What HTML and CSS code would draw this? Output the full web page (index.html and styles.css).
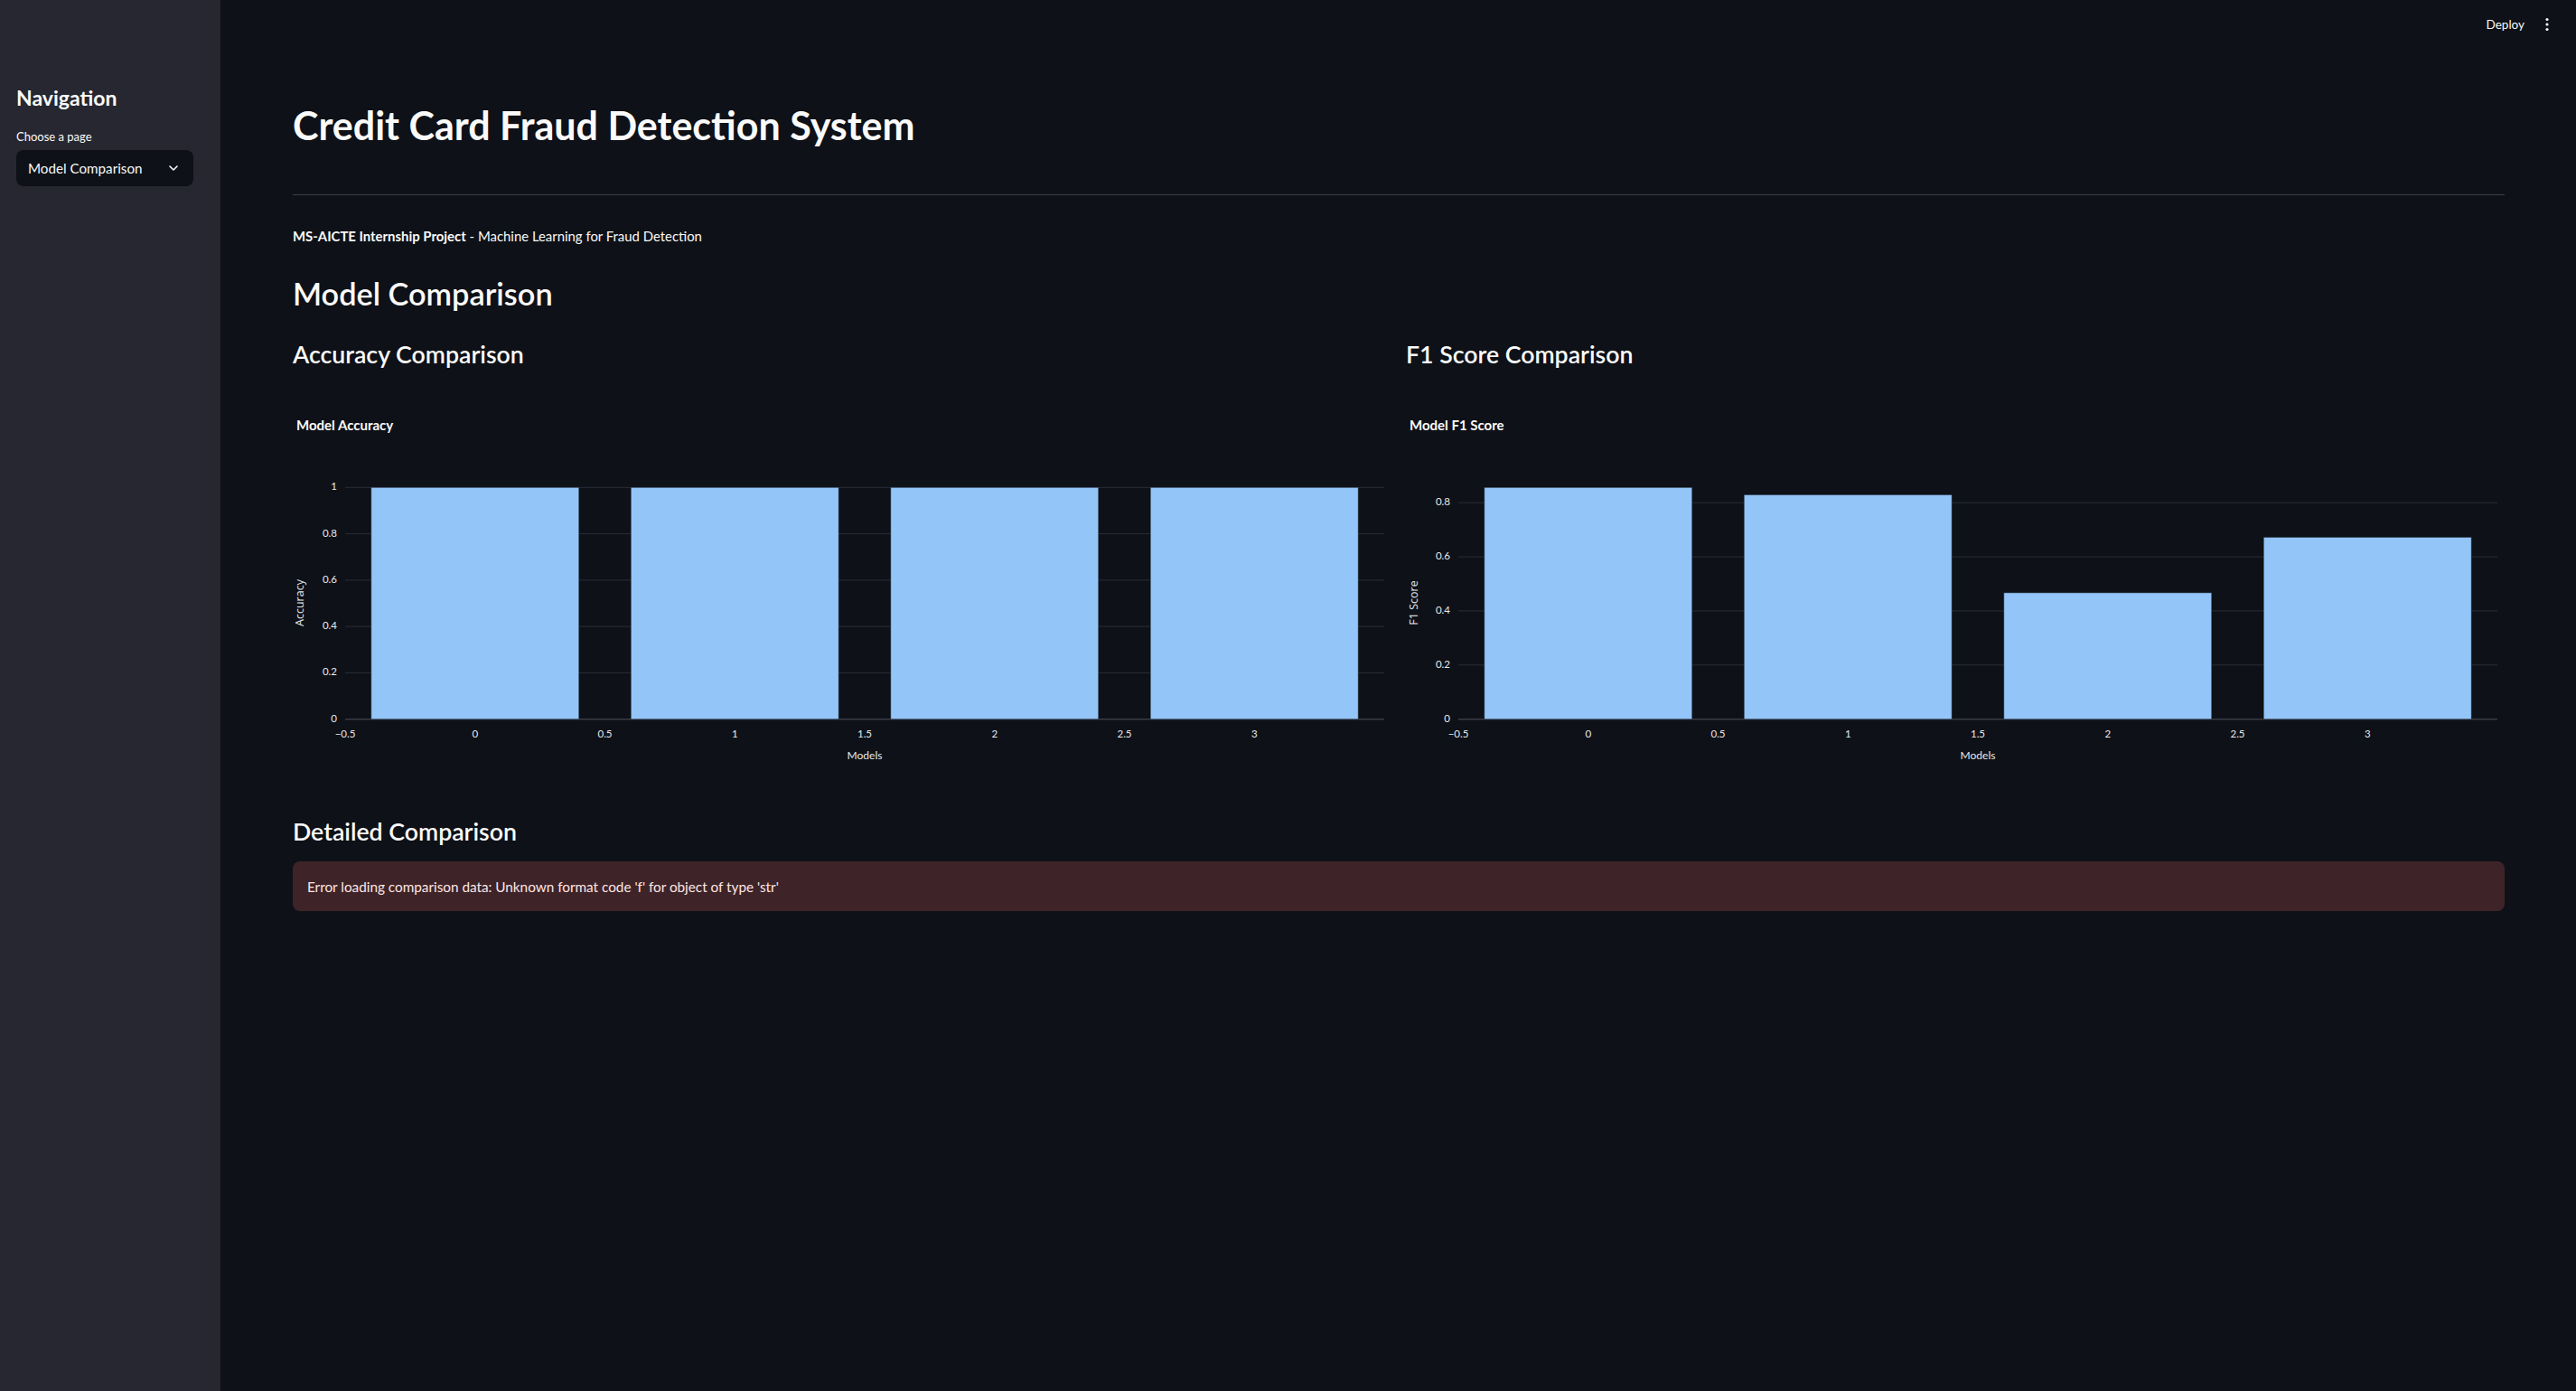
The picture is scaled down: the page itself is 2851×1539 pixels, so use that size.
FILE: index.html
```html
<!DOCTYPE html>
<html lang="en">
<head>
<meta charset="utf-8">
<title>Credit Card Fraud Detection System</title>
<link rel="stylesheet" href="styles.css">
</head>
<body>
<div class="app">
  <aside class="sidebar">
    <h2 class="side-title">Navigation</h2>
    <label class="side-label">Choose a page</label>
    <div class="select">
      <span class="select-value">Model Comparison</span>
      <svg class="chevron" viewBox="0 0 24 24" width="16" height="16"><path d="M6 9l6 6 6-6" fill="none" stroke="#fafafa" stroke-width="2.4" stroke-linecap="round" stroke-linejoin="round"/></svg>
    </div>
  </aside>
  <main class="main">
    <header class="toolbar">
      <span class="deploy">Deploy</span>
      <svg class="kebab" viewBox="0 0 6 16" width="6" height="16"><circle cx="3" cy="2.5" r="1.6" fill="#fafafa"/><circle cx="3" cy="8" r="1.6" fill="#fafafa"/><circle cx="3" cy="13.5" r="1.6" fill="#fafafa"/></svg>
    </header>
    <div class="block">
      <h1 class="title">Credit Card Fraud Detection System</h1>
      <hr class="divider">
      <p class="subtitle"><strong>MS-AICTE Internship Project</strong> - Machine Learning for Fraud Detection</p>
      <h2 class="h2">Model Comparison</h2>
      <div class="columns">
        <section class="col">
          <h3 class="h3">Accuracy Comparison</h3>
          <svg class="chart" viewBox="0 0 1216 430" width="1216" height="430">
            <text class="c-title" x="4" y="32">Model Accuracy</text>
            <g class="grid">
              <line x1="58" x2="1208" y1="99.3" y2="99.3"/>
              <line x1="58" x2="1208" y1="150.6" y2="150.6"/>
              <line x1="58" x2="1208" y1="201.9" y2="201.9"/>
              <line x1="58" x2="1208" y1="253.1" y2="253.1"/>
              <line x1="58" x2="1208" y1="304.4" y2="304.4"/>
            </g>
            <line class="zero" x1="58" x2="1208" y1="355.7" y2="355.7"/>
            <g class="bars">
              <rect x="86.75" y="99.3" width="230" height="256.4"/>
              <rect x="374.25" y="99.3" width="230" height="256.4"/>
              <rect x="661.75" y="99.3" width="230" height="256.4"/>
              <rect x="949.25" y="99.3" width="230" height="256.4"/>
            </g>
            <g class="ytick">
              <text x="49" y="99.3">1</text>
              <text x="49" y="150.6">0.8</text>
              <text x="49" y="201.9">0.6</text>
              <text x="49" y="253.1">0.4</text>
              <text x="49" y="304.4">0.2</text>
              <text x="49" y="355.7">0</text>
            </g>
            <g class="xtick">
              <text x="58" y="373">−0.5</text>
              <text x="201.75" y="373">0</text>
              <text x="345.5" y="373">0.5</text>
              <text x="489.25" y="373">1</text>
              <text x="633" y="373">1.5</text>
              <text x="776.75" y="373">2</text>
              <text x="920.5" y="373">2.5</text>
              <text x="1064.25" y="373">3</text>
            </g>
            <text class="axis-title" x="633" y="397">Models</text>
            <text class="axis-title y-title" x="9" y="227" transform="rotate(-90 9 227)">Accuracy</text>
          </svg>
        </section>
        <section class="col">
          <h3 class="h3">F1 Score Comparison</h3>
          <svg class="chart" viewBox="0 0 1216 430" width="1216" height="430">
            <text class="c-title" x="4" y="32">Model F1 Score</text>
            <g class="grid">
              <line x1="58" x2="1208" y1="116.2" y2="116.2"/>
              <line x1="58" x2="1208" y1="176.1" y2="176.1"/>
              <line x1="58" x2="1208" y1="235.9" y2="235.9"/>
              <line x1="58" x2="1208" y1="295.8" y2="295.8"/>
            </g>
            <line class="zero" x1="58" x2="1208" y1="355.7" y2="355.7"/>
            <g class="bars">
              <rect x="86.75" y="99.3" width="230" height="256.4"/>
              <rect x="374.25" y="107.4" width="230" height="248.3"/>
              <rect x="661.75" y="215.8" width="230" height="139.9"/>
              <rect x="949.25" y="154.4" width="230" height="201.3"/>
            </g>
            <g class="ytick">
              <text x="49" y="116.2">0.8</text>
              <text x="49" y="176.1">0.6</text>
              <text x="49" y="235.9">0.4</text>
              <text x="49" y="295.8">0.2</text>
              <text x="49" y="355.7">0</text>
            </g>
            <g class="xtick">
              <text x="58" y="373">−0.5</text>
              <text x="201.75" y="373">0</text>
              <text x="345.5" y="373">0.5</text>
              <text x="489.25" y="373">1</text>
              <text x="633" y="373">1.5</text>
              <text x="776.75" y="373">2</text>
              <text x="920.5" y="373">2.5</text>
              <text x="1064.25" y="373">3</text>
            </g>
            <text class="axis-title" x="633" y="397">Models</text>
            <text class="axis-title y-title" x="9.5" y="227" transform="rotate(-90 9.5 227)">F1 Score</text>
          </svg>
        </section>
      </div>
      <h3 class="h3 detail">Detailed Comparison</h3>
      <div class="alert">Error loading comparison data: Unknown format code 'f' for object of type 'str'</div>
    </div>
  </main>
</div>
</body>
</html>
```
FILE: styles.css
```css
* { box-sizing: border-box; }
html, body { margin: 0; padding: 0; }
body {
  background: #0e1117;
  color: #fafafa;
  font-family: Lato, "Noto Sans", sans-serif;
}
.app {
  display: flex;
  min-height: 1539px;
}
.sidebar {
  width: 244px;
  flex: 0 0 244px;
  background: #262730;
  padding: 92px 18px 0 18px;
}
.side-title {
  margin: 0;
  font-size: 23px;
  font-weight: 700;
  line-height: 32px;
}
.side-label {
  display: block;
  margin-top: 18px;
  font-size: 13px;
  line-height: 18px;
}
.select {
  margin-top: 6px;
  height: 40px;
  width: 196px;
  background: #0e1117;
  border-radius: 8px;
  display: flex;
  align-items: center;
  justify-content: space-between;
  padding: 0 14px 0 13px;
}
.select-value { font-size: 15.2px; }
.chevron { display: block; }
.main {
  flex: 1;
  padding: 0 79px 0 80px;
}
.toolbar {
  height: 60px;
  display: flex;
  justify-content: flex-end;
  align-items: center;
  gap: 22px;
  padding: 0 0 6px 0;
  margin-right: -50px;
}
.deploy { font-size: 13.5px; }
.kebab { display: block; }
.title {
  margin: 53px 0 0 0;
  font-size: 43px;
  line-height: 52px;
  font-weight: 700;
}
.divider {
  margin: 50px 0 0 0;
  border: 0;
  border-top: 1px solid #3d3f49;
  height: 0;
}
.subtitle {
  margin: 33px 0 0 0;
  font-size: 14.9px;
  line-height: 24px;
}
.subtitle strong { font-weight: 700; }
.h2 {
  margin: 30px 0 0 0;
  font-size: 34.3px;
  line-height: 43px;
  font-weight: 600;
}
.columns {
  margin-top: 29px;
  display: grid;
  grid-template-columns: 1fr 1fr;
  gap: 16px;
}
.h3 {
  margin: 0;
  font-size: 26.7px;
  line-height: 34px;
  font-weight: 600;
}
.chart {
  display: block;
  width: 100%;
  height: 430px;
  margin-top: 31px;
  overflow: visible;
  font-family: Lato, sans-serif;
}
.c-title { font-size: 15px; font-weight: 700; fill: #fafafa; dominant-baseline: middle; }
.grid line { stroke: #2c2e37; stroke-width: 1; }
.zero { stroke: #3a3c46; stroke-width: 1.5; }
.bars rect { fill: #93c5f8; stroke: rgba(14, 17, 23, 0.45); stroke-width: 1; }
.ytick text { font-size: 11.5px; fill: #e8eaee; text-anchor: end; dominant-baseline: middle; }
.xtick text { font-size: 11.5px; fill: #e8eaee; text-anchor: middle; dominant-baseline: middle; }
.axis-title { font-size: 12px; fill: #e8eaee; text-anchor: middle; dominant-baseline: middle; }
.y-title { font-family: "Open Sans", sans-serif; font-size: 12.5px; }
.detail { margin-top: 33px; }
.alert {
  margin-top: 16px;
  height: 55px;
  background: #3e2428;
  border-radius: 8px;
  color: #ffe4e4;
  font-size: 15.3px;
  display: flex;
  align-items: center;
  padding: 0 16px;
}
```
